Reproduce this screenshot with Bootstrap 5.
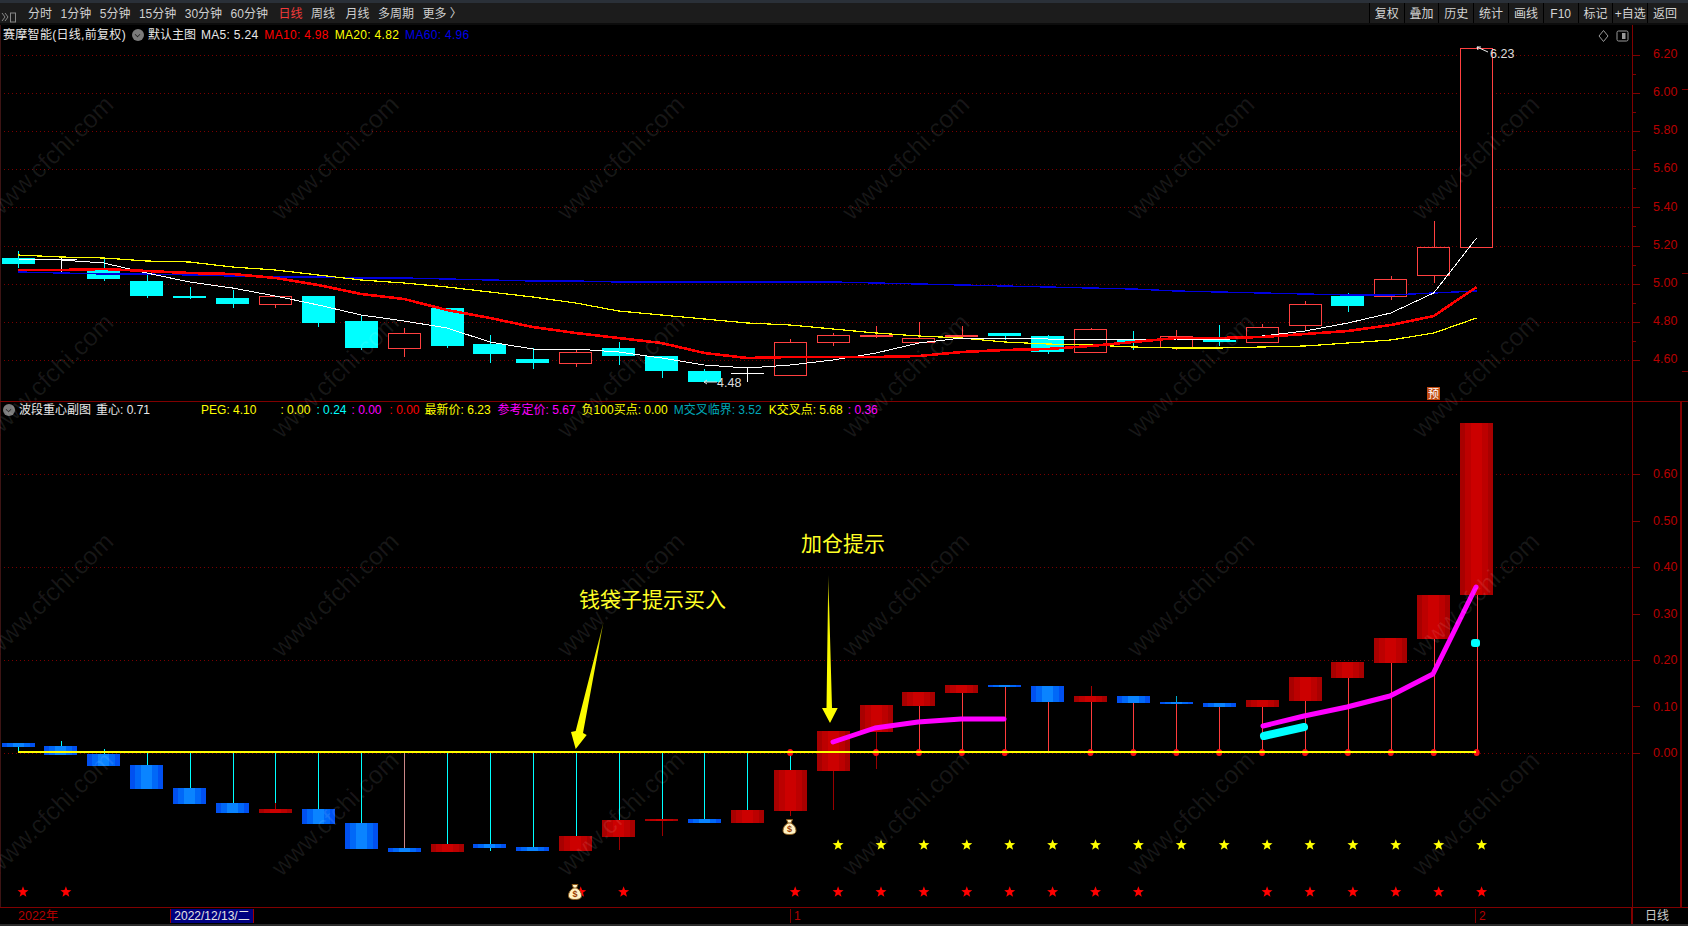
<!DOCTYPE html>
<html lang="zh">
<head>
<meta charset="utf-8">
<title>赛摩智能 日线</title>
<link href="https://cdn.jsdelivr.net/npm/bootstrap@5.3.0/dist/css/bootstrap.min.css" rel="stylesheet">
<style>
html,body{height:100%;background:#000;margin:0}
body{font-family:"Liberation Sans","Noto Sans CJK SC",sans-serif;font-size:12px;line-height:1;color:#ddd;width:1688px;height:926px;position:relative}
.topstrip{height:3px;background:#2a3038}
.tool-row{height:22px;background:#1c1c1c;border-bottom:2px solid #0c0c0c}
.tool-left{padding-left:28px;padding-top:2px;gap:8.5px}
.tool-text{color:#cfcfcf;white-space:nowrap}
.tool-on{color:#f23a3a;margin-left:2px}
.tool-wide{margin-left:2px}
.tool-cell{width:34.8px;height:100%;padding-top:2px;color:#d4d4d4;border-left:1px solid #000;white-space:nowrap}
.tool-tail{width:6px}
.tool-icon{position:absolute;left:1px;top:9px}
.stage{position:relative;overflow:hidden}
.stage-top{height:376px}
.stage-sub{height:506px;border-top:1px solid #800000}
.plot{display:block;width:1632px;height:100%;flex:none}
.scale{display:block;width:56px;height:100%;flex:none;background:#000}
.legend-line{position:absolute;left:3px;top:3px;white-space:nowrap;height:13px}
.legend-sub{left:3px;top:1px}
.dot-btn{display:inline-block;width:12px;height:12px;border-radius:50%;background:#7b7b7b;position:relative;flex:none}
.dot-btn::after{content:"";position:absolute;left:3px;top:3px;width:5px;height:5px;border-right:1.5px solid #222;border-bottom:1.5px solid #222;transform:rotate(45deg) scale(.8)}
.c-w{color:#e8e8e8}.c-r{color:#f00}.c-y{color:#ff0}.c-b{color:#0000e6}.c-c{color:#0ff}.c-m{color:#f0f}.c-t{color:#00a8b8}
.wide-ls{letter-spacing:.3px}
.g4{margin-left:4px}.g5{margin-left:5px}.g6{margin-left:6px}.g7{margin-left:7px}.g8{margin-left:8px}.g24{margin-left:24px}.g51{margin-left:51px}
.corner-tools{position:absolute;left:1596px;top:4px}
.date-row{height:17px;border-top:1px solid #800000;position:relative;background:#000}
.date-year{color:#b40000;padding-left:18px;padding-top:2px;font-size:12.5px}
.date-tag{position:absolute;left:170px;top:1px;width:84px;height:14px;line-height:14px;background:#000080;color:#e4e4e4;text-align:center;border-left:1px solid #a00000;border-right:1px solid #a00000;white-space:nowrap}
.date-mark{position:absolute;top:1px;height:14px;line-height:15px;padding-left:3px;border-left:1px solid #800000;color:#b40000}
.date-one{left:790px}.date-two{left:1475px}
.date-end{position:absolute;left:1631px;top:-1px;width:50px;height:17px;border-left:2px solid #800000;border-top:1px solid #800000;color:#ccc;text-align:center;line-height:17px}
.date-side{position:absolute;left:1681px;top:-1px;width:7px;height:17px;border-top:1px solid #800000}
.foot-strip{height:2px;background:#2a2a2a}
.ax-txt{font-size:12.5px;fill:#b80000}
.note-txt{font-size:21px;fill:#ffff26}
.price-txt{font-size:12.5px;fill:#ddd}
.pre-txt{font-size:11px;fill:#fff}
.wm{font-size:25px;fill:rgba(255,255,255,.09)}
.bag-txt{font-size:9px;font-weight:700;fill:#9a3b00}
.mark-layer{position:absolute;left:0;top:0;width:1632px;height:926px;pointer-events:none}
</style>
</head>
<body class="overflow-hidden">
<div class="topstrip"></div>
<div class="tool-row d-flex justify-content-between position-relative">
  <svg class="tool-icon" width="16" height="11" viewBox="0 0 16 11"><path d="M1 1l3 4-3 4M4 1l3 4-3 4" fill="none" stroke="#888" stroke-width="1"/><rect x="9.5" y="1" width="5" height="9" fill="none" stroke="#888"/></svg>
  <div class="tool-left d-flex align-items-center">
    <span class="tool-text">分时</span><span class="tool-text">1分钟</span><span class="tool-text">5分钟</span><span class="tool-text">15分钟</span><span class="tool-text">30分钟</span><span class="tool-text">60分钟</span><span class="tool-text tool-on">日线</span><span class="tool-text">周线</span><span class="tool-text tool-wide">月线</span><span class="tool-text">多周期</span><span class="tool-text">更多 〉</span>
  </div>
  <div class="d-flex">
    <div class="tool-cell d-flex align-items-center justify-content-center">复权</div>
    <div class="tool-cell d-flex align-items-center justify-content-center">叠加</div>
    <div class="tool-cell d-flex align-items-center justify-content-center">历史</div>
    <div class="tool-cell d-flex align-items-center justify-content-center">统计</div>
    <div class="tool-cell d-flex align-items-center justify-content-center">画线</div>
    <div class="tool-cell d-flex align-items-center justify-content-center">F10</div>
    <div class="tool-cell d-flex align-items-center justify-content-center">标记</div>
    <div class="tool-cell d-flex align-items-center justify-content-center">+自选</div>
    <div class="tool-cell d-flex align-items-center justify-content-center">返回</div>
    <div class="tool-tail"></div>
  </div>
</div>

<section class="stage stage-top d-flex">
  <svg class="plot" viewBox="0 25 1632 376" shape-rendering="crispEdges">
    <g id="topGrid"></g><g id="topBars"></g><g id="topLines"></g>
    <g shape-rendering="auto">
      <path d="M1477 47l11 5M1477 47l4 0M1477 47l1 3" stroke="#eee" fill="none"/>
      <text class="price-txt" x="1490" y="58">6.23</text>
      <path d="M717 382H704M704 382l3-2M704 382l3 2" stroke="#ddd" fill="none"/>
      <text class="price-txt" x="717" y="387">4.48</text>
      <rect x="1427" y="387" width="13" height="13" fill="#c04a10"/>
      <text class="pre-txt" x="1433.5" y="398" text-anchor="middle">预</text>
    </g>
  </svg>
  <svg class="scale" viewBox="1632 25 56 376" shape-rendering="crispEdges">
    <line x1="1632" y1="25" x2="1632" y2="401" stroke="#800000" stroke-width="2"/>
    <g id="topTicks"></g>
    <g shape-rendering="auto">
      <text class="ax-txt" x="1653" y="58">6.20</text><text class="ax-txt" x="1653" y="96">6.00</text><text class="ax-txt" x="1653" y="134">5.80</text><text class="ax-txt" x="1653" y="172">5.60</text><text class="ax-txt" x="1653" y="211">5.40</text><text class="ax-txt" x="1653" y="249">5.20</text><text class="ax-txt" x="1653" y="287">5.00</text><text class="ax-txt" x="1653" y="325">4.80</text><text class="ax-txt" x="1653" y="363">4.60</text>
    </g>
  </svg>
  <div class="legend-line d-flex align-items-center">
    <span class="c-w wide-ls">赛摩智能(日线,前复权)</span>
    <span class="dot-btn g6"></span>
    <span class="c-w g4">默认主图</span>
    <span class="c-w g5 wide-ls">MA5: 5.24</span>
    <span class="c-r g6 wide-ls">MA10: 4.98</span>
    <span class="c-y g6 wide-ls">MA20: 4.82</span>
    <span class="c-b g6 wide-ls">MA60: 4.96</span>
  </div>
  <svg class="corner-tools" width="36" height="14" viewBox="0 0 36 14"><path d="M7.5 1.5L12 7l-4.500 5.500L3 7z" fill="none" stroke="#9a9a9a"/><rect x="21" y="2" width="11" height="10" rx="1.500" fill="none" stroke="#9a9a9a"/><rect x="26" y="4" width="3.500" height="6" fill="#9a9a9a"/></svg>
</section>

<section class="stage stage-sub d-flex">
  <svg class="plot" viewBox="0 402 1632 505" shape-rendering="crispEdges">
    <g id="subGrid"></g><g id="subWicks"></g><g id="subBars"></g><g id="subZero"></g>
    <g shape-rendering="auto">
      <defs>
        <linearGradient id="arrA" x1="603" y1="622" x2="576" y2="749" gradientUnits="userSpaceOnUse"><stop offset="0" stop-color="#777700"/><stop offset=".22" stop-color="#f4f400"/><stop offset="1" stop-color="#ffff00"/></linearGradient>
        <linearGradient id="arrB" x1="828" y1="575" x2="830" y2="723" gradientUnits="userSpaceOnUse"><stop offset="0" stop-color="#777700"/><stop offset=".22" stop-color="#f4f400"/><stop offset="1" stop-color="#ffff00"/></linearGradient>
      </defs>
      <polyline points="833,742 875,728 918,722 961,719 1004,719" fill="none" stroke="#f0f" stroke-width="5" stroke-linecap="round" stroke-linejoin="round"/>
      <polyline points="1263,726 1304,716 1347,707 1390,696 1433,674 1476,587" fill="none" stroke="#f0f" stroke-width="5" stroke-linecap="round" stroke-linejoin="round"/>
      <line x1="1264" y1="736" x2="1304" y2="727" stroke="#0ff" stroke-width="8" stroke-linecap="round"/>
      <rect x="1471" y="639" width="9" height="8" rx="3" fill="#0ff"/>
      <polygon points="575.700,749 586.700,735 583,733 603.500,622 575.700,731 571,732" fill="url(#arrA)"/>
      <polygon points="830,723 837.700,708 832,708 828.300,575 826.500,708 822,708" fill="url(#arrB)"/>
      <text class="note-txt" x="801" y="551">加仓提示</text>
      <text class="note-txt" x="579" y="607">钱袋子提示买入</text>
    </g>
    <g id="subStars" shape-rendering="auto"></g>
  </svg>
  <svg class="scale" viewBox="1632 402 56 505" shape-rendering="crispEdges">
    <line x1="1632" y1="402" x2="1632" y2="907" stroke="#800000" stroke-width="2"/>
    <line x1="1681" y1="402" x2="1681" y2="907" stroke="#800000" stroke-width="2"/>
    <g id="subTicks"></g>
    <g shape-rendering="auto">
      <text class="ax-txt" x="1653" y="478">0.60</text><text class="ax-txt" x="1653" y="525">0.50</text><text class="ax-txt" x="1653" y="571">0.40</text><text class="ax-txt" x="1653" y="618">0.30</text><text class="ax-txt" x="1653" y="664">0.20</text><text class="ax-txt" x="1653" y="711">0.10</text><text class="ax-txt" x="1653" y="757">0.00</text>
    </g>
  </svg>
  <div class="legend-line legend-sub d-flex align-items-center">
    <span class="dot-btn"></span>
    <span class="c-w g4">波段重心副图</span>
    <span class="c-w g5">重心: 0.71</span>
    <span class="c-y g51">PEG: 4.10</span>
    <span class="c-y g24">: 0.00</span>
    <span class="c-c g6">: 0.24</span>
    <span class="c-m g5">: 0.00</span>
    <span class="c-r g8">: 0.00</span>
    <span class="c-y g5">最新价: 6.23</span>
    <span class="c-m g7">参考定价: 5.67</span>
    <span class="c-y g6">负100买点: 0.00</span>
    <span class="c-t g6">M交叉临界: 3.52</span>
    <span class="c-y g7">K交叉点: 5.68</span>
    <span class="c-m g5">: 0.36</span>
  </div>
</section>

<footer class="date-row">
  <div class="date-year">2022年</div>
  <div class="date-tag">2022/12/13/二</div>
  <div class="date-mark date-one">1</div>
  <div class="date-mark date-two">2</div>
  <div class="date-end">日线</div>
  <div class="date-side"></div>
</footer>
<div class="foot-strip"></div>
<svg class="mark-layer" viewBox="0 0 1632 926"><g id="marks"></g></svg>

<script src="https://cdn.jsdelivr.net/npm/bootstrap@5.3.0/dist/js/bootstrap.bundle.min.js"></script>
<script>
const cx=i=>18+i*42.9, W=33;
const $=id=>document.getElementById(id);
const ln=(x1,y1,x2,y2,c,w=1,extra='')=>`<line x1="${x1}" y1="${y1}" x2="${x2}" y2="${y2}" stroke="${c}" stroke-width="${w}" ${extra}/>`;
const px=v=>Math.round(v)+.5;
const dash='stroke-dasharray="1 3"';
let s='';
for(let n=0;n<9;n++){const y=px(54.5+n*38.2);s+=ln(0,y,1632,y,'#7a0000',1,dash);}
s+=ln(.5,25,.5,401,'#3c1414');
$('topGrid').innerHTML=s;
const C=[['c',258,264,251,268],['w',259,259,257,273],['c',268,279,258,281],['c',281,296,274,298],['c',296,298,287,299],['c',298,304,290,308],['h',296,305,296,308],['c',296,323,296,327],['c',321,348,315,350],['h',333,349,328,357],['c',308,346,308,348],['c',344,354,335,363],['c',359,363,348,369],['h',352,364,349,367],['c',348,356,342,365],['c',356,371,356,378],['c',371,382,369,383],['w',373,373,368,382],['h',342,376,339,376],['h',335,343,333,346],['f',335,337,326,338],['h',338,343,322,343],['f',335,337,326,338],['c',333,336,333,340],['c',336,352,335,354],['h',329,353,328,353],['c',340,342,331,350],['h',336,348,330,350],['c',340,342,325,346],['h',327,343,324,343],['h',304,326,301,330],['c',296,306,293,312],['h',279,297,276,300],['h',247,276,221,283],['h',48,248,48,248]];
s='';
C.forEach((d,i)=>{const x=cx(i),l=Math.round(x-W/2),k=px(x);const col={c:'#0ff',h:'#ff4040',f:'#ff4040',w:'#fff'}[d[0]];
 if(d[3]<d[1])s+=ln(k,d[3],k,d[1],col);
 if(d[4]>d[2])s+=ln(k,d[2],k,d[4],col);
 if(d[0]=='c')s+=`<rect x="${l}" y="${d[1]}" width="${W}" height="${d[2]-d[1]}" fill="#0ff"/>`;
 if(d[0]=='f')s+=`<rect x="${l}" y="${d[1]}" width="${W}" height="${d[2]-d[1]}" fill="#ff4040"/>`;
 if(d[0]=='h')s+=`<rect x="${l+.5}" y="${d[1]+.5}" width="${W-1}" height="${d[2]-d[1]-1}" fill="#000" stroke="#ff4040"/>`;
 if(d[0]=='w')s+=ln(l,d[1]+.5,l+W,d[1]+.5,'#fff');
});
$('topBars').innerHTML=s;
const M5=[259,260,263,273,282,288,296,305,315,321,328,342,349,349,352,358,365,368,365,360,353,343,338,338,339,339,339,339,340,336,331,323,313,293,238];
const M10=[270,270,269,271,273,274,278,285,294,299,310,318,327,333,338,343,353,358,357,357,357,356,352,350,349,346,342,338,338,337,334,331,325,316,287];
const M20=[255,257,258,261,262,267,270,275,280,283,287,292,297,303,311,315,319,323,325,329,333,336,338,342,344,345,347,348,348,347,346,343,340,333,318];
const M60=[272,273,274,274,275,276,277,277,278,278,279,280,281,281,282,282,282,282,282,282,283,284,285,286,287,288,289,291,292,293,294,295,295,293,291];
const pl=(a,c,w)=>`<polyline points="${a.map((y,i)=>cx(i).toFixed(1)+','+y).join(' ')}" fill="none" stroke="${c}" stroke-width="${w}"/>`;
$('topLines').innerHTML=pl(M60,'#0000e0',1.4)+pl(M20,'#ffff00',1.2)+pl(M5,'#fff',1)+pl(M10,'#ff0000',2.600);
s='';
for(let n=0;n<17;n++){const y=px(54.5+n*19.1);s+=ln(1633,y,n%2?1636:1640,y,'#800000');}
[89,273,371].forEach(y=>s+=ln(1682,y+.5,1688,y+.5,'#800000'));
$('topTicks').innerHTML=s;
const vy=v=>752.7-v*464;
s='';
[.2,.4,.6,0].forEach(v=>{const y=px(vy(v));s+=ln(0,y,1632,y,'#7a0000',1,dash);});
s+=ln(.5,402,.5,907,'#3c1414');
$('subGrid').innerHTML=s;
s='';
for(let n=0;n<=6;n++){const y=px(vy(n/10));s+=ln(1633,y,1640,y,'#800000');}
$('subTicks').innerHTML=s;
const defsG=`<defs>
<linearGradient id="gR"><stop offset="0" stop-color="#a80000"/><stop offset=".15" stop-color="#a80000"/><stop offset=".15" stop-color="#bc0000"/><stop offset=".32" stop-color="#bc0000"/><stop offset=".32" stop-color="#cc0000"/><stop offset=".68" stop-color="#cc0000"/><stop offset=".68" stop-color="#bc0000"/><stop offset=".85" stop-color="#bc0000"/><stop offset=".85" stop-color="#a80000"/></linearGradient>
<linearGradient id="gB"><stop offset="0" stop-color="#0050f0"/><stop offset=".15" stop-color="#0050f0"/><stop offset=".15" stop-color="#0068f8"/><stop offset=".32" stop-color="#0068f8"/><stop offset=".32" stop-color="#0a84ff"/><stop offset=".68" stop-color="#0a84ff"/><stop offset=".68" stop-color="#0068f8"/><stop offset=".85" stop-color="#0068f8"/><stop offset=".85" stop-color="#0050f0"/></linearGradient></defs>`;
const B=[['b',743,747],['b',746,755],['b',754,766],['b',765,789],['b',788,804],['b',803,813],['r',809,813],['b',809,824],['b',823,849],['b',848,852],['r',844,852],['b',844,848],['b',847,851],['r',836,851],['r',820,837],['r',819,821],['b',819,823],['r',810,823],['r',770,811],['r',731,771],['r',705,732],['r',692,706],['r',685,693],['b',685,687],['b',686,702],['r',696,702],['b',696,703],['b',702,704],['b',703,707],['r',700,707],['r',677,701],['r',662,678],['r',638,663],['r',595,639],['r',423,595]];
s=defsG;
B.forEach((d,i)=>{s+=`<rect x="${Math.round(cx(i)-W/2)}" y="${d[1]}" width="${W}" height="${Math.max(d[2]-d[1],2)}" fill="url(#${d[0]=='r'?'gR':'gB'})"/>`;});
$('subBars').innerHTML=s;
s='';
const W2=[[0,747,753,'#0ff'],[1,741,746,'#0ff'],[2,749,754,'#0ff'],[3,753,765,'#0ff'],[4,753,788,'#0ff'],[5,753,803,'#0ff'],[6,753,803,'#0ff'],[6,803,809,'#a00'],[7,753,809,'#0ff'],[8,753,823,'#0ff'],[9,753,848,'#c88'],[10,753,844,'#0ff'],[11,753,844,'#0ff'],[11,848,851,'#0ff'],[12,753,847,'#0ff'],[13,753,836,'#0ff'],[14,753,820,'#0ff'],[14,837,850,'#900'],[15,753,819,'#0ff'],[15,821,836,'#900'],[16,753,819,'#0ff'],[17,753,810,'#0ff'],[18,753,770,'#0ff'],[18,811,816,'#a00'],[19,771,810,'#900'],[20,732,769,'#900'],[21,706,753,'#ff3c3c'],[22,693,753,'#ff3c3c'],[23,687,753,'#ff3c3c'],[24,702,753,'#ff3c3c'],[25,702,753,'#ff3c3c'],[25,686,696,'#a00'],[26,703,753,'#ff3c3c'],[27,704,753,'#ff3c3c'],[27,696,702,'#0ac'],[28,707,753,'#ff3c3c'],[29,707,753,'#ff3c3c'],[30,701,753,'#ff3c3c'],[31,678,753,'#ff3c3c'],[32,663,753,'#ff3c3c'],[33,639,753,'#ff3c3c'],[34,595,753,'#ff3c3c']];
W2.forEach(d=>{const k=px(cx(d[0]));s+=ln(k,d[1],k,d[2],d[3]);});
$('subWicks').innerHTML=s;
s='';
[18,20,21,22,23,25,26,27,28,29,30,31,32,33,34].forEach(i=>{s+=`<ellipse cx="${cx(i).toFixed(1)}" cy="752.5" rx="3" ry="3.500" fill="#ff1010" shape-rendering="auto"/>`;});
s+=`<rect x="18" y="751" width="1458" height="2" fill="#ffff00"/>`;
$('subZero').innerHTML=s;
const star=(x,y,c)=>{let p=[];for(let i=0;i<10;i++){const r=i%2?2.4:5.8,a=-Math.PI/2+i*Math.PI/5;p.push((x+r*Math.cos(a)).toFixed(1)+','+(y+r*Math.sin(a)).toFixed(1));}return `<polygon points="${p.join(' ')}" fill="${c}"/>`;};
s='';
for(let i=19;i<=34;i++)s+=star(cx(i)+5,845,'#ffff00');
[0,1,14,18,19,20,21,22,23,24,25,26,29,30,31,32,33,34,13].forEach(i=>s+=star(cx(i)+5,892,'#f00'));
const bag=(x,y)=>`<g transform="translate(${x} ${y})"><path d="M-3-7.500H3L1.500-4C5-2 6.500 1 6.500 3.500 6.500 6.500 4 7.500 0 7.500-4 7.500-6.500 6.500-6.500 3.500-6.500 1-5-2-1.500-4Z" fill="#fff2c4" stroke="#8a5a1c"/><path d="M-2-4H2" stroke="#8a5a1c"/><text class="bag-txt" x="0" y="5" text-anchor="middle">$</text></g>`;
s+=bag(575,892)+bag(789.5,827);
$('subStars').innerHTML=s;
s='';
[-10,275.5,561,846,1131,1416].forEach(l=>[158,376,595,814].forEach(y=>{s+=`<text class="wm" transform="translate(${l+60} ${y}) rotate(-44)" text-anchor="middle" dy="8">www.cfchi.com</text>`;}));
$('marks').innerHTML=s;
</script>
</body>
</html>
